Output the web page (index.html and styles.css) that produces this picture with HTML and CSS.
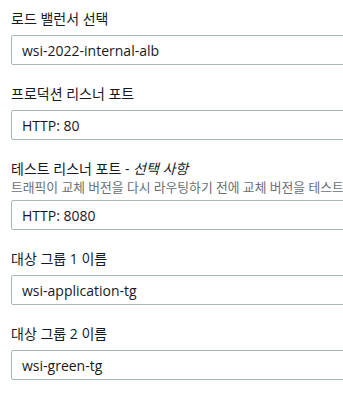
FILE: index.html
```html
<!DOCTYPE html>
<html lang="ko">
<head>
    <meta charset="UTF-8">
    <meta name="viewport" content="width=device-width, initial-scale=1.0">
    <title>리스너 설정</title>
    <link rel="stylesheet" href="styles.css">
</head>
<body>
    <div class="form">
        <div class="field">
            <label class="label" for="lb">로드 밸런서 선택</label>
            <input class="input" id="lb" type="text" value="wsi-2022-internal-alb">
        </div>

        <div class="field">
            <label class="label" for="prod">프로덕션 리스너 포트</label>
            <input class="input" id="prod" type="text" value="HTTP: 80">
        </div>

        <div class="field">
            <label class="label" for="test">테스트 리스너 포트 - <i>선택 사항</i></label>
            <div class="desc">트래픽이 교체 버전을 다시 라우팅하기 전에 교체 버전을 테스트</div>
            <input class="input" id="test" type="text" value="HTTP: 8080">
        </div>

        <div class="field">
            <label class="label" for="tg1">대상 그룹 1 이름</label>
            <input class="input" id="tg1" type="text" value="wsi-application-tg">
        </div>

        <div class="field">
            <label class="label" for="tg2">대상 그룹 2 이름</label>
            <input class="input" id="tg2" type="text" value="wsi-green-tg">
        </div>
    </div>
</body>
</html>
```

FILE: styles.css
```css
body {
    margin: 0;
    background-color: #ffffff;
    font-family: 'Open Sans', 'Noto Sans CJK KR', sans-serif;
    color: #16191f;
    overflow: hidden;
}

.form {
    width: 380px;
    padding: 9px 0 0 11px;
    display: flex;
    flex-direction: column;
    gap: 19px;
}

.field {
    display: flex;
    flex-direction: column;
}

.label {
    font-size: 14px;
    line-height: 20px;
    margin-bottom: 6px;
    white-space: nowrap;
}

.label i {
    font-style: italic;
}

.desc {
    font-size: 12.8px;
    line-height: 16px;
    color: #687078;
    white-space: nowrap;
    margin-top: -6px;
    margin-bottom: 5px;
}

.input {
    box-sizing: border-box;
    height: 30px;
    width: 100%;
    padding: 0 10px;
    border: 1px solid #aab7b8;
    border-radius: 2px;
    font-family: 'Open Sans', 'Noto Sans CJK KR', sans-serif;
    font-size: 14px;
    color: #16191f;
    background-color: #ffffff;
}
```
